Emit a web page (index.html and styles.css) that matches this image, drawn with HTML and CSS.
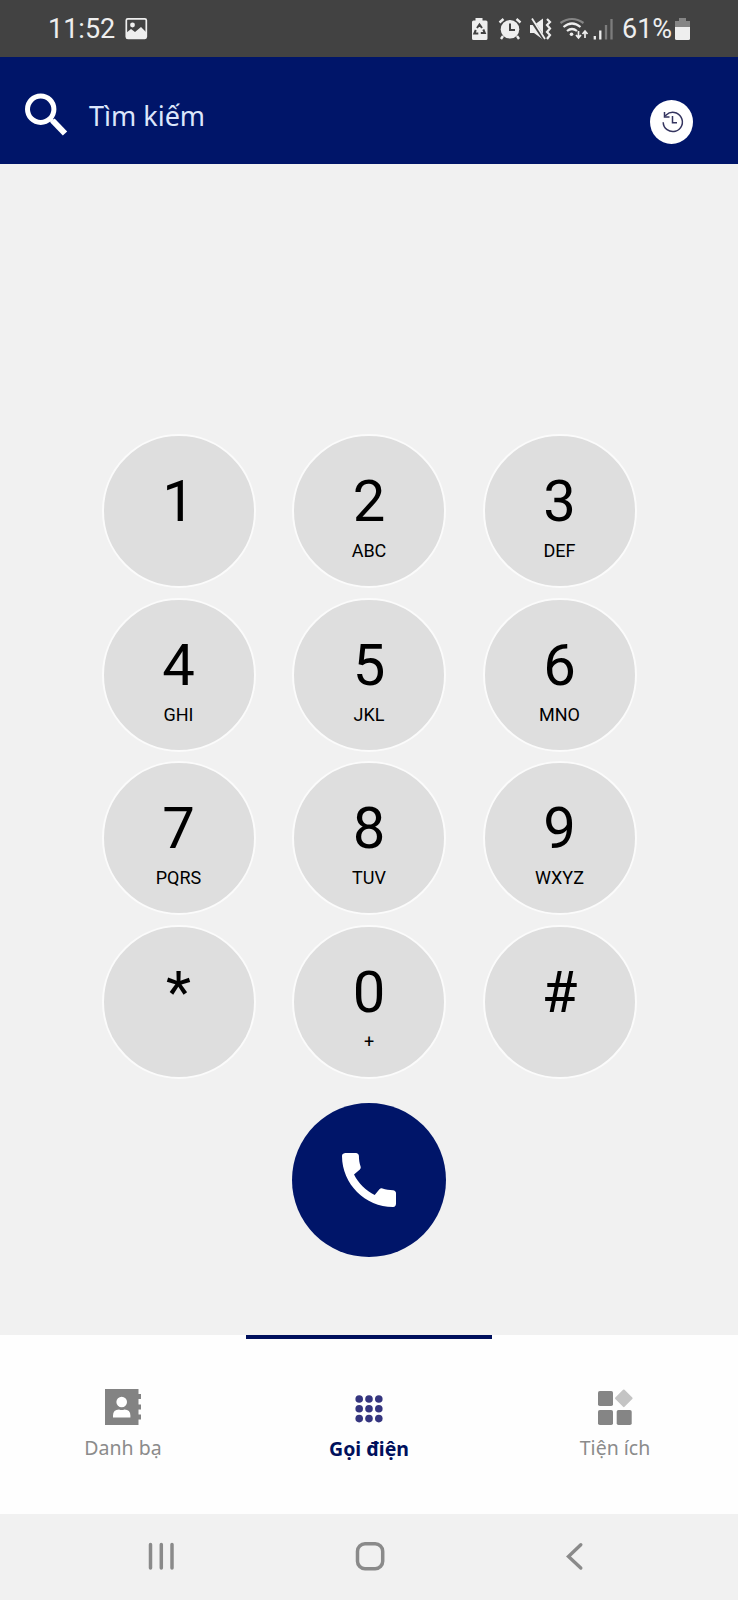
FILE: index.html
```html
<!DOCTYPE html>
<html lang="vi">
<head>
<meta charset="utf-8">
<title>Gọi điện</title>
<link rel="stylesheet" href="styles.css">
</head>
<body>
<div class="phone">
  <div class="status">
    <span class="clock">11:52</span>
    <svg class="picture" width="22" height="22" viewBox="125 17 22 22"><rect x="126.300" y="17.800" width="20" height="19.500" rx="1.500" fill="none" stroke="#eee" stroke-width="1.700"/><circle cx="132.500" cy="24" r="2.400" fill="#eee"/><path d="M126 32l5-4 4 3 6-5 5 5v6.500h-20z" fill="#eee"/></svg>
    <div class="status-right">
      <svg width="18" height="24" viewBox="470 16 18 24"><path d="M475.500 17h7v2.500h3.500q1.500 0 1.500 1.500v16.500q0 1.500-1.500 1.500h-12.500q-1.500 0-1.500-1.500v-16.500q0-1.500 1.500-1.500h2z" fill="#eee"/><path d="M477 27l2.500-3.500 2.500 3.500M483.300 28.500l1.500 3.500h-4M478.300 32.500h-4l1.500-3.500" fill="none" stroke="#424242" stroke-width="2"/></svg>
      <svg width="24" height="24" viewBox="498 16 24 24"><circle cx="510" cy="28.300" r="9.300" fill="#eee"/><path d="M510 22.500v6.500h5" fill="none" stroke="#424242" stroke-width="2"/><path d="M499.500 21.500l4-3.500M520.500 21.500l-4-3.500M503 35l-2 3M517 35l2 3" stroke="#eee" stroke-width="2.400"/></svg>
      <svg width="24" height="24" viewBox="529 16 24 24"><path d="M530 24h4l9-6.500v21l-9-6.500h-4z" fill="#eee"/><path d="M530.500 17.500l14 21" stroke="#424242" stroke-width="3.500"/><path d="M532 17.500l13 20.500" stroke="#eee" stroke-width="1.800"/><path d="M547 18l3 3-3 3 3 3.500-3 3.500 3 3-3 4" fill="none" stroke="#eee" stroke-width="2.200"/></svg>
      <svg width="30" height="24" viewBox="559 16 30 24"><g fill="none" stroke-width="2.200"><path d="M560.500 22q11.500-8 23 0" stroke="#858585"/><path d="M563.500 26q8.500-7 17 0M567 30q5-4 10 0" stroke="#eee"/></g><circle cx="571.500" cy="33.300" r="1.800" fill="#eee"/><path d="M578.500 30v7M576 34l2.500 3 2.500-3M585 37v-7M582.500 33l2.500-3 2.500 3" fill="none" stroke="#eee" stroke-width="1.700"/></svg>
      <svg width="20" height="24" viewBox="593 16 20 24"><path d="M594.800 35v3.500M600.300 29.500v9" stroke="#eee" stroke-width="2.300"/><path d="M606 24v14.500M611.500 18v20.500" stroke="#7d7d7d" stroke-width="2.300"/></svg>
      <span class="percent">61%</span>
      <svg width="16" height="24" viewBox="675 16 16 24"><path d="M679 17h7v3h4v6h-15v-6h4z" fill="#858585"/><path d="M675 26h15v11.500q0 1.500-1.500 1.500h-12q-1.500 0-1.500-1.500z" fill="#eee"/></svg>
    </div>
  </div>

  <div class="search">
    <svg width="44" height="44" viewBox="24 92 44 44" fill="none" stroke="#fff"><circle cx="40.700" cy="109.200" r="13.200" stroke-width="5"/><path d="M50 118.500l2.500 2.500" stroke-width="4"/><path d="M52.500 120.500l12.500 13" stroke-width="6"/></svg>
    <span class="search-text">Tìm kiếm</span>
    <div class="history"><svg width="24" height="24" viewBox="659 110 24 24" fill="none" stroke="#34345f" stroke-width="1.500"><path d="M662.200 122.200a9.600 9.600 0 1 0 3-7.200l-1 1"/><path d="M663.500 112v5h5M671.500 116v6.800h4.500"/></svg></div>
  </div>

  <div class="dialer">
    <div class="pad">
      <div class="key"><b>1</b></div>
      <div class="key"><b>2</b><span>ABC</span></div>
      <div class="key"><b>3</b><span>DEF</span></div>
      <div class="key"><b>4</b><span>GHI</span></div>
      <div class="key"><b>5</b><span>JKL</span></div>
      <div class="key"><b>6</b><span>MNO</span></div>
      <div class="key"><b>7</b><span>PQRS</span></div>
      <div class="key"><b>8</b><span>TUV</span></div>
      <div class="key"><b>9</b><span>WXYZ</span></div>
      <div class="key"><b>*</b></div>
      <div class="key"><b>0</b><span>+</span></div>
      <div class="key"><b>#</b></div>
    </div>
    <div class="call"><svg width="72" height="72" viewBox="0 0 24 24" fill="#fff"><path d="M20.010 15.380c-1.230 0-2.420-.2-3.530-.56-.35-.12-.74-.03-1.010.24l-1.570 1.970c-2.830-1.350-5.480-3.900-6.890-6.830l1.950-1.660c.27-.28.35-.67.24-1.020-.37-1.110-.56-2.300-.56-3.530 0-.54-.45-.99-.99-.99H4.190C3.650 3 3 3.240 3 3.990 3 13.280 10.730 21 20.010 21c.71 0 .99-.63.99-1.180v-3.450c0-.54-.45-.99-.99-.99z"/></svg></div>
  </div>

  <div class="tabs">
    <div class="tab">
      <svg width="38" height="38" viewBox="104 1388 38 38"><path d="M105 1389h33.500v5h2.500v5h-2.500v5.500h2.500v5h-2.500v5h2.500v5h-2.500v5.500h-33.500z" fill="#838383"/><circle cx="121.700" cy="1402" r="5.300" fill="#fff"/><path d="M113 1417.500v-2q0-6 6-6 2.700 1.200 5.400 0 6 0 6 6v2z" fill="#fff"/></svg>
      <span>Danh bạ</span>
    </div>
    <div class="tab active">
      <svg width="38" height="38" viewBox="350.500 1388 38 38" fill="#35357f"><circle cx="359.700" cy="1399" r="3.800"/><circle cx="369.500" cy="1399" r="3.800"/><circle cx="379.300" cy="1399" r="3.800"/><circle cx="359.700" cy="1408.800" r="3.800"/><circle cx="369.500" cy="1408.800" r="3.800"/><circle cx="379.300" cy="1408.800" r="3.800"/><circle cx="359.700" cy="1418.600" r="3.800"/><circle cx="369.500" cy="1418.600" r="3.800"/><circle cx="379.300" cy="1418.600" r="3.800"/></svg>
      <span>Gọi điện</span>
    </div>
    <div class="tab">
      <svg width="38" height="38" viewBox="596 1388 38 38" fill="#858585"><rect x="598" y="1391" width="15" height="15" rx="1.800"/><rect x="598" y="1410" width="15" height="15" rx="1.800"/><rect x="616.700" y="1410" width="15" height="15" rx="1.800"/><rect x="617.300" y="1391.800" width="13" height="13" rx="1" fill="#c4c4c4" transform="rotate(45 623.800 1398.300)"/></svg>
      <span>Tiện ích</span>
    </div>
  </div>

  <div class="sysnav">
    <svg width="28" height="30" viewBox="147 1541 28 30"><path d="M150.500 1544.500v23.500M161.300 1544.500v23.500M172 1544.500v23.500" stroke="#8a8a8a" stroke-width="3.500" stroke-linecap="round"/></svg>
    <svg width="30" height="30" viewBox="352.500 1541 30 30"><rect x="355" y="1543.700" width="25.200" height="25" rx="7.500" fill="none" stroke="#8a8a8a" stroke-width="3.500"/></svg>
    <svg width="18" height="30" viewBox="565 1541 18 30"><path d="M580.800 1544.700l-12.300 11.800 12.300 11.500" fill="none" stroke="#8a8a8a" stroke-width="3.400" stroke-linecap="round"/></svg>
  </div>
</div>
</body>
</html>
```
FILE: styles.css
```css
* { box-sizing: border-box; }
body { margin: 0; background: #f1f1f1; }
svg { display: block; flex: none; overflow: visible; }
.phone {
  width: 738px;
  height: 1600px;
  display: flex;
  flex-direction: column;
  background: #f1f1f1;
  overflow: hidden;
}
.status {
  height: 57px;
  flex: none;
  display: flex;
  align-items: center;
  padding: 0 47px 0 48px;
  background: #424242;
  color: #eee;
  font: 27px/32px Roboto, sans-serif;
}
.clock { width: 77px; }
.status-right { margin-left: auto; display: flex; align-items: center; }
.status-right svg:nth-child(2) { margin-left: 10px; }
.status-right svg:nth-child(3) { margin-left: 7px; }
.status-right svg:nth-child(4) { margin-left: 6px; }
.status-right svg:nth-child(5) { margin-left: 4px; }
.percent { width: 53px; margin-left: 9px; }
.search {
  height: 107px;
  flex: none;
  display: flex;
  align-items: flex-start;
  padding: 35px 45px 0 24px;
  background: #001569;
}
.search-text {
  margin-left: 21px;
  color: #dce6fb;
  font: 27px/36px "Noto Sans", sans-serif;
  padding-top: 6px;
}
.history {
  width: 43px;
  height: 44px;
  margin: 8px 0 0 auto;
  display: grid;
  place-items: center;
  border-radius: 50%;
  background: #fff;
}
.dialer {
  flex: none;
  height: 1171px;
  padding-top: 270px;
  display: flex;
  flex-direction: column;
  align-items: center;
}
.pad {
  display: grid;
  grid-template-columns: repeat(3, 154px);
  grid-auto-rows: 154px;
  gap: 9.6px 36.500px;
}
.key {
  border: 2px solid #fbfbfb;
  border-radius: 50%;
  background: #dedede;
  color: #000;
  display: flex;
  flex-direction: column;
  align-items: center;
  padding-top: 31px;
  font-family: Roboto, sans-serif;
}
.key b { font-weight: 400; font-size: 58px; line-height: 68px; }
.key span { font-size: 18px; line-height: 22px; margin-top: 5px; }
.call {
  width: 154px;
  height: 154px;
  margin-top: 24px;
  border-radius: 50%;
  background: #001569;
  display: grid;
  place-items: center;
}
.tabs {
  flex: none;
  height: 179px;
  display: grid;
  grid-template-columns: repeat(3, 1fr);
  background: #fefefe;
}
.tab {
  display: flex;
  flex-direction: column;
  align-items: center;
  padding-top: 49px;
  border-top: 4px solid transparent;
  color: #8b8b8b;
  font: 19.5px/28px "Noto Sans", sans-serif;
}
.tab span { margin-top: 8px; }
.active { border-top-color: #00105c; color: #00105c; font-weight: 700; }
.active span { margin-top: 9px; }
.sysnav {
  flex: 1;
  display: flex;
  justify-content: space-between;
  align-items: flex-start;
  padding: 27px 155px 0 147px;
}
```
